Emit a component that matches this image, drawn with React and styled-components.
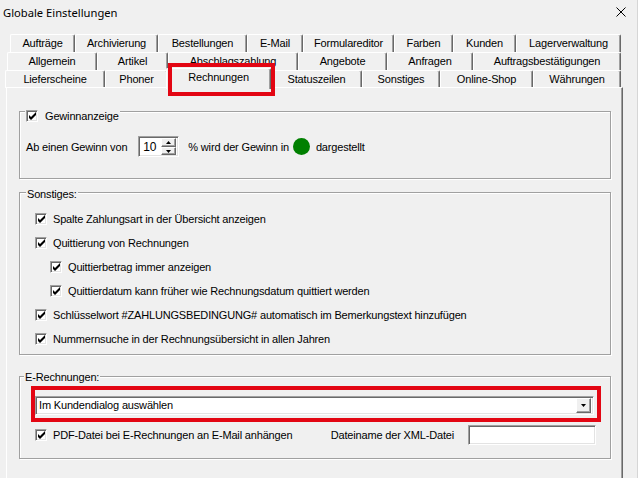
import React from 'react'
import styled, { createGlobalStyle, css } from 'styled-components'

const GlobalStyle = createGlobalStyle`
  html, body {
    margin: 0;
    padding: 0;
    background: #f0f0f0;
  }
  body {
    font-family: "Liberation Sans", Arial, sans-serif;
    font-size: 11px;
    letter-spacing: -0.17px;
    color: #000;
  }
`

const tabRows = [
  {
    indent: 10,
    tabs: [
      ['Aufträge', 65],
      ['Archivierung', 83],
      ['Bestellungen', 89],
      ['E-Mail', 56],
      ['Formulareditor', 91],
      ['Farben', 59],
      ['Kunden', 63],
      ['Lagerverwaltung', 105]
    ]
  },
  {
    indent: 7,
    tabs: [
      ['Allgemein', 90],
      ['Artikel', 71],
      ['Abschlagszahlung', 130],
      ['Angebote', 89],
      ['Anfragen', 86],
      ['Auftragsbestätigungen', 148]
    ]
  },
  {
    indent: 5,
    tabs: [
      ['Lieferscheine', 100],
      ['Phoner', 63],
      ['Rechnungen', 103],
      ['Statuszeilen', 91],
      ['Sonstiges', 78],
      ['Online-Shop', 93],
      ['Währungen', 88]
    ]
  }
]

const selectedTab = 'Rechnungen'

const options = [
  { label: 'Spalte Zahlungsart in der Übersicht anzeigen' },
  { label: 'Quittierung von Rechnungen' },
  { label: 'Quittierbetrag immer anzeigen', indent: true },
  { label: 'Quittierdatum kann früher wie Rechnungsdatum quittiert werden', indent: true },
  { label: 'Schlüsselwort #ZAHLUNGSBEDINGUNG# automatisch im Bemerkungstext hinzufügen' },
  { label: 'Nummernsuche in der Rechnungsübersicht in allen Jahren' }
]

const sunken = css`
  box-sizing: border-box;
  background: #fff;
  border: 1px solid;
  border-color: #a0a0a0 #fff #fff #a0a0a0;
  box-shadow: inset 1px 1px 0 #696969, inset -1px -1px 0 #e3e3e3;
`

const raised = css`
  box-sizing: border-box;
  background: #f0f0f0;
  border: 1px solid;
  border-color: #fff #696969 #696969 #fff;
  box-shadow: inset -1px -1px 0 #a0a0a0;
`

const Window = styled.div`
  width: 637px;
  height: 478px;
  overflow: hidden;
  border-right: 1px solid #d6d6d6;
  display: flex;
  flex-direction: column;
`

const TitleBar = styled.div`
  height: 28px;
  box-sizing: border-box;
  padding: 4px 11px 0 3px;
  display: flex;
  justify-content: space-between;
  align-items: flex-start;
  font-family: "Noto Sans", "Open Sans", sans-serif;
  font-size: 11.2px;
  letter-spacing: 0;
  line-height: 17px;
`

const CloseIcon = styled.svg`
  margin-top: 3px;
`

const TabStrip = styled.div`
  margin-top: 7px;
  display: flex;
  flex-direction: column;
`

const TabRow = styled.div`
  display: flex;
  align-items: flex-start;
  height: 18px;
  padding-left: ${(p) => p.$indent}px;
`

const Tab = styled.div`
  box-sizing: border-box;
  flex: none;
  width: ${(p) => p.$w}px;
  height: 18px;
  background: #f0f0f0;
  border-left: 1px solid #fff;
  border-top: 1px solid #fff;
  border-right: 1px solid #696969;
  border-radius: 2px 2px 0 0;
  box-shadow: inset -1px 0 0 #a0a0a0;
  line-height: 16px;
  text-align: center;
  white-space: nowrap;
  overflow: hidden;
`

const ActiveTab = styled(Tab)`
  position: relative;
  z-index: 2;
  overflow: visible;
  width: ${(p) => p.$w + 2}px;
  height: 21px;
  margin: -2px 0 -1px -2px;

  &::after {
    content: '';
    position: absolute;
    left: 1px;
    top: -6px;
    width: 107px;
    height: 33px;
    box-sizing: border-box;
    border: 4px solid #e30613;
  }
`

const Panel = styled.div`
  box-sizing: border-box;
  width: 617px;
  height: 400px;
  margin: -1px 0 0 6px;
  border-left: 1px solid #fff;
  border-top: 1px solid #fff;
  border-right: 1px solid #696969;
  box-shadow: inset -1px 0 0 #a0a0a0;
  padding: 23px 11px 0 12px;
  display: flex;
  flex-direction: column;
`

const GroupBox = styled.div`
  position: relative;
  box-sizing: border-box;
  height: ${(p) => p.$h}px;
  margin-top: ${(p) => p.$mt || 0}px;
  border: 1px solid #a0a0a0;
  box-shadow: inset 1px 1px 0 #fff, 1px 1px 0 #fff;
  padding: ${(p) => p.$pad};
  display: flex;
  flex-direction: column;
`

const Legend = styled.div`
  position: absolute;
  top: ${(p) => p.$top}px;
  left: ${(p) => p.$left}px;
  height: 14px;
  padding: 0 1px;
  background: #f0f0f0;
  display: flex;
  align-items: center;
  gap: 7px;
  line-height: 14px;
`

const Line = styled.div`
  display: flex;
  align-items: center;
  height: ${(p) => p.$h || 21}px;
`

const Spin = styled.div`
  ${sunken}
  width: 41px;
  height: 21px;
  margin: 0 9px 0 11px;
  display: flex;
  align-items: center;
  justify-content: space-between;
  padding: 2px 2px 2px 4px;
  font-size: 12px;
`

const SpinButtons = styled.div`
  display: flex;
  flex-direction: column;
  width: 15px;
`

const SpinButton = styled.div`
  ${raised}
  height: 8.5px;
  display: flex;
  align-items: center;
  justify-content: center;
`

const Dot = styled.span`
  width: 17px;
  height: 17px;
  border-radius: 50%;
  background: #008000;
  margin: 0 6px 0 4px;
`

const CheckRow = styled.div`
  display: flex;
  align-items: center;
  height: 24px;
  gap: 6px;
  padding-left: ${(p) => (p.$indent ? 15 : 0)}px;
`

const Box = styled.span`
  ${sunken}
  width: 12px;
  height: 12px;
  flex: none;
  display: inline-flex;
  align-items: center;
  justify-content: center;
`

const Highlight = styled.div`
  border: 4px solid #e30613;
  padding: 6px 3px 3px 0;
`

const Combo = styled.div`
  ${sunken}
  height: 19px;
  display: flex;
  align-items: center;
  justify-content: space-between;
  padding: 2px 2px 2px 3px;
  line-height: 15px;
`

const ComboButton = styled.div`
  ${raised}
  width: 15px;
  height: 15px;
  display: flex;
  align-items: center;
  justify-content: center;
`

const FooterRow = styled.div`
  margin-top: 3px;
  height: 20px;
  display: flex;
  align-items: center;
  justify-content: space-between;
  padding: 0 5px 0 4px;
`

const FieldGroup = styled.div`
  display: flex;
  align-items: center;
  gap: 14px;
`

const TextField = styled.div`
  ${sunken}
  width: 128px;
  height: 20px;
`

function Check() {
  return (
    <Box>
      <svg width="7" height="8" viewBox="0 -1 7 8">
        <polygon points="0,2 2,4 7,-1 7,2 2,7 0,5" fill="#000" />
      </svg>
    </Box>
  )
}

function Arrow({ up }) {
  return (
    <svg width="5" height="3" viewBox="0 0 5 3">
      <polygon points={up ? '2.5,0 5,3 0,3' : '0,0 5,0 2.5,3'} fill="#000" />
    </svg>
  )
}

function App() {
  return (
    <Window>
      <GlobalStyle />
      <TitleBar>
        <span>Globale Einstellungen</span>
        <CloseIcon width="10" height="10" viewBox="0 0 10 10">
          <path d="M0.5 0.5 L9.5 9.5 M9.5 0.5 L0.5 9.5" stroke="#000" strokeWidth="1" />
        </CloseIcon>
      </TitleBar>

      <TabStrip>
        {tabRows.map((row, i) => (
          <TabRow key={i} $indent={row.indent}>
            {row.tabs.map(([name, w]) =>
              name === selectedTab ? (
                <ActiveTab key={name} $w={w}>{name}</ActiveTab>
              ) : (
                <Tab key={name} $w={w}>{name}</Tab>
              )
            )}
          </TabRow>
        ))}
      </TabStrip>

      <Panel>
        <GroupBox $h={68} $pad="24px 0 0 6px">
          <Legend $top={-3} $left={5}>
            <Check />
            <span>Gewinnanzeige</span>
          </Legend>
          <Line>
            <span>Ab einen Gewinn von</span>
            <Spin>
              <span>10</span>
              <SpinButtons>
                <SpinButton><Arrow up /></SpinButton>
                <SpinButton><Arrow /></SpinButton>
              </SpinButtons>
            </Spin>
            <span>% wird der Gewinn in</span>
            <Dot />
            <span>dargestellt</span>
          </Line>
        </GroupBox>

        <GroupBox $h={163} $mt={13} $pad="14px 0 0 15px">
          <Legend $top={-6} $left={6}>Sonstiges:</Legend>
          {options.map((o) => (
            <CheckRow key={o.label} $indent={o.indent}>
              <Check />
              <span>{o.label}</span>
            </CheckRow>
          ))}
        </GroupBox>

        <GroupBox $h={83} $mt={21} $pad="9px 9px 0 11px">
          <Legend $top={-7} $left={4}>E-Rechnungen:</Legend>
          <Highlight>
            <Combo>
              <span>Im Kundendialog auswählen</span>
              <ComboButton><Arrow /></ComboButton>
            </Combo>
          </Highlight>
          <FooterRow>
            <CheckRow>
              <Check />
              <span>PDF-Datei bei E-Rechnungen an E-Mail anhängen</span>
            </CheckRow>
            <FieldGroup>
              <span>Dateiname der XML-Datei</span>
              <TextField />
            </FieldGroup>
          </FooterRow>
        </GroupBox>
      </Panel>
    </Window>
  )
}

export default App
